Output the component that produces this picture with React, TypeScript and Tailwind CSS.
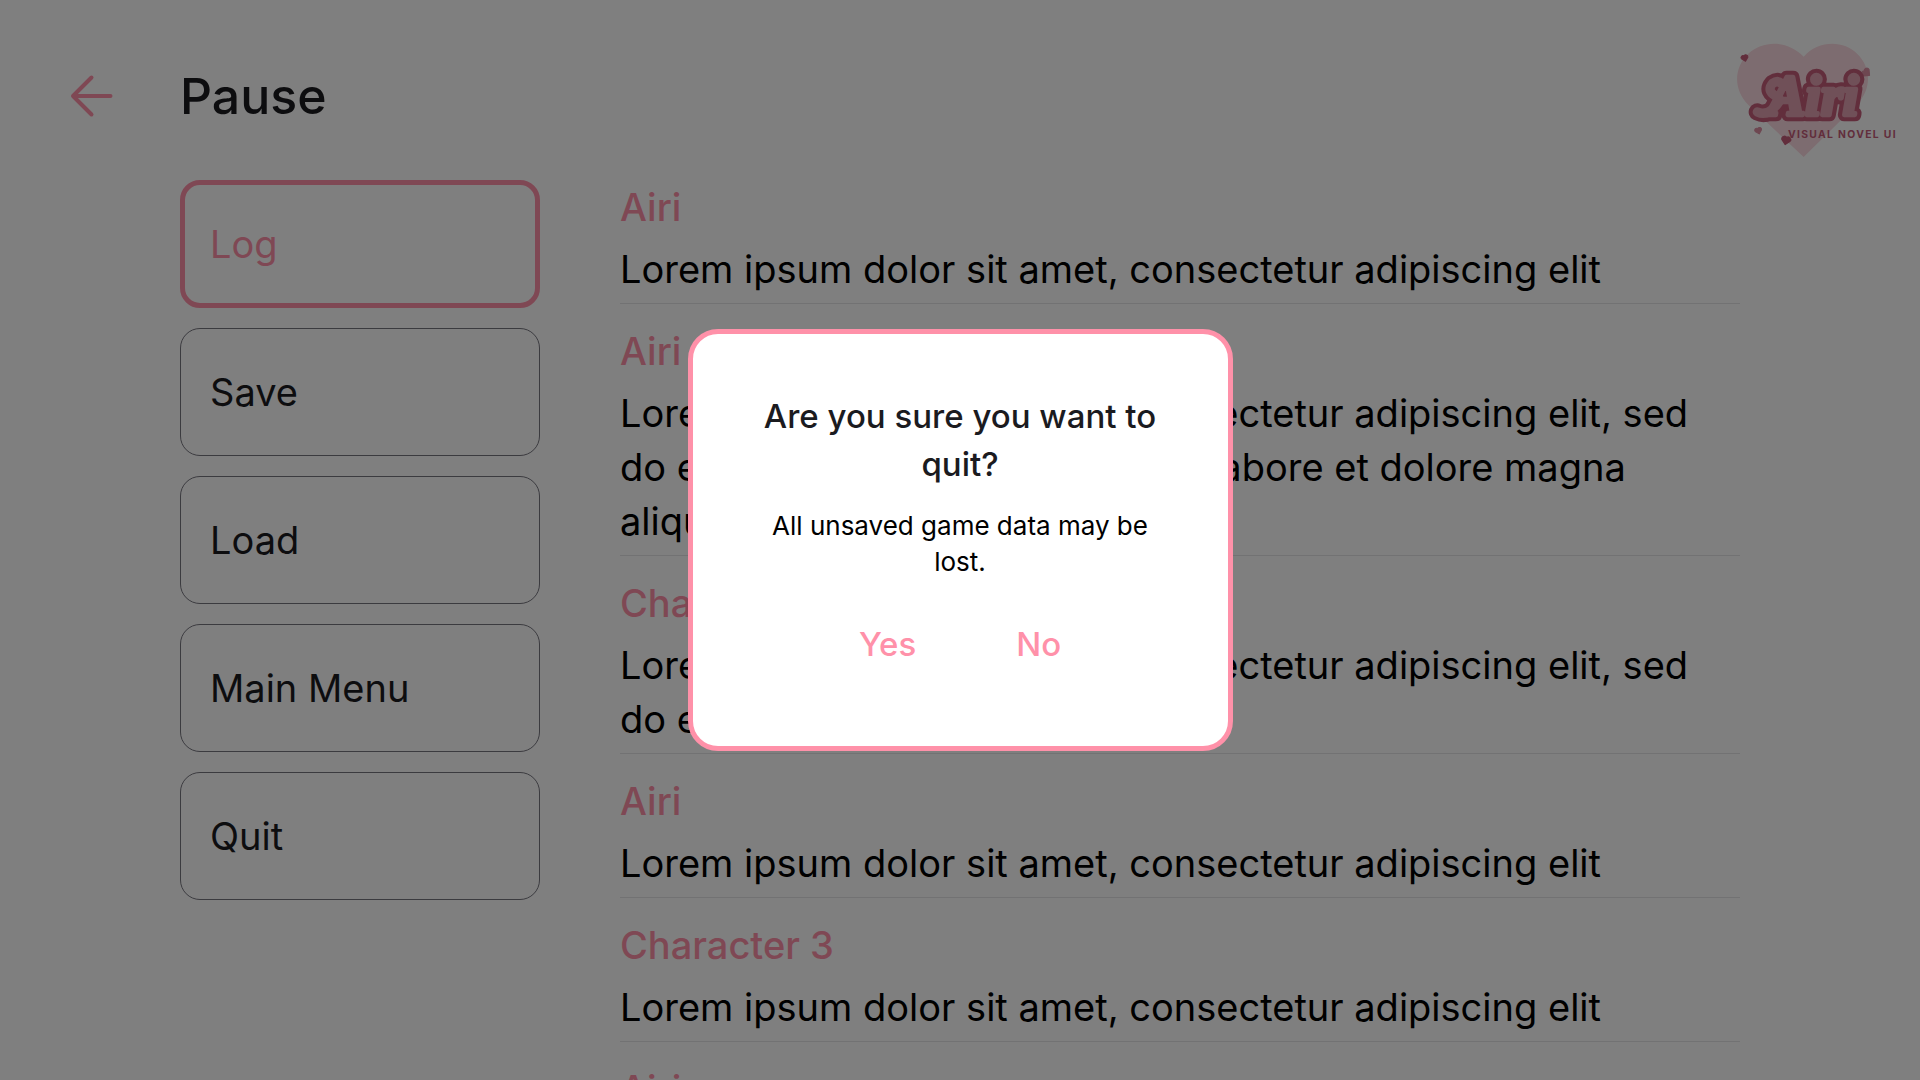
type Entry = { speaker: string; text: string };

const menu = ["Log", "Save", "Load", "Main Menu", "Quit"];

const base = "Lorem ipsum dolor sit amet, consectetur adipiscing elit";

const entries: Entry[] = [
  { speaker: "Airi", text: base },
  {
    speaker: "Airi",
    text: `${base}, sed do eiusmod tempor incididunt ut labore et dolore magna aliqua.`,
  },
  { speaker: "Character 2", text: `${base}, sed do eiusmod tempor.` },
  { speaker: "Airi", text: base },
  { speaker: "Character 3", text: base },
  { speaker: "Airi", text: base },
];

const smallHeart = "M0 9 L-9 0 A5.5 5.5 0 0 1 0 -6 A5.5 5.5 0 0 1 9 0 Z";
const swash = "M112 246 Q146 262 178 214 M176 202 Q136 186 158 160 Q172 150 184 160";

function Logo() {
  return (
    <svg viewBox="0 0 600 420" className="h-[140px] w-[200px]" role="img" aria-label="Airi Visual Novel UI">
      <path
        d="M251 381 L86 226 C36 176 44 110 84 72 C132 28 205 32 251 80 C292 32 370 28 412 72 C454 112 456 180 410 224 Z"
        fill="#fad9e0"
      />
      <g fill="#dc8fa3" stroke="#dc8fa3" strokeWidth="3" strokeLinejoin="round">
        <path d={smallHeart} transform="translate(74 84) rotate(-15) scale(1.1)" fill="#c45c79" stroke="#c45c79" />
        <path d={smallHeart} transform="translate(439 128) rotate(-50) scale(1.35)" />
        <path d={smallHeart} transform="translate(115 302) rotate(-15) scale(1.1)" />
        <path d={smallHeart} transform="translate(198 331) rotate(12) scale(1.4)" fill="#c45c79" stroke="#c45c79" />
      </g>
      <g
        fontFamily="'Liberation Serif', serif"
        fontSize="168"
        fontStyle="italic"
        fontWeight="700"
        strokeLinecap="round"
        strokeLinejoin="round"
      >
        <path d={swash} fill="none" stroke="#c45c79" strokeWidth="52" />
        <text x="144" y="254" fill="#c45c79" stroke="#c45c79" strokeWidth="38">
          Airi
        </text>
        <path d={swash} fill="none" stroke="#e0a1b0" strokeWidth="28" />
        <text x="144" y="254" fill="#e0a1b0" stroke="#e0a1b0" strokeWidth="13">
          Airi
        </text>
      </g>
      <text x="204" y="323" fill="#c45c79" fontFamily="Inter, sans-serif" fontSize="31" fontWeight="700" letterSpacing="4">
        VISUAL NOVEL UI
      </text>
    </svg>
  );
}

export default function App() {
  return (
    <div className="h-screen overflow-hidden bg-white font-['Inter',sans-serif] text-[#1b1b1f]">
      <header className="flex h-[180px] items-start">
        <div className="flex w-[180px] shrink-0 pt-[60px] pl-[62px]">
          <button type="button" aria-label="Back" className="flex h-[72px] w-[60px] items-center justify-center">
            <svg viewBox="0 0 60 60" className="size-[60px]" fill="none" stroke="#ff91a9" strokeWidth="4" strokeLinecap="round" strokeLinejoin="round">
              <path d="M48.500 30H11M29.500 11.500L11 30l18.500 18.500" />
            </svg>
          </button>
        </div>
        <h1 className="grow pt-[60px] text-[50px] leading-[72px] font-medium">Pause</h1>
        <div className="shrink-0 pt-[30px]">
          <Logo />
        </div>
      </header>

      <main className="flex items-start gap-20 px-[180px]">
        <nav className="flex w-[360px] shrink-0 flex-col gap-5" aria-label="Pause menu">
          {menu.map((item) =>
            item === "Log" ? (
              <button
                key={item}
                type="button"
                aria-current="page"
                className="h-32 rounded-[20px] border-5 border-[#ff91a9] px-[25px] text-left text-[38px] leading-[54px] text-[#ff91a9]"
              >
                {item}
              </button>
            ) : (
              <button
                key={item}
                type="button"
                className="h-32 rounded-[20px] border border-[#77767f] px-[29px] text-left text-[38px] leading-[54px]"
              >
                {item}
              </button>
            ),
          )}
        </nav>

        <section className="flex min-w-0 grow flex-col gap-5" aria-label="Log">
          {entries.map((entry, i) => (
            <article key={i} className="flex flex-col gap-2 border-b border-[#e4e4e6] pb-[7px] text-[38px] leading-[54px]">
              <h2 className="font-medium text-[#ff91a9]">{entry.speaker}</h2>
              <p className="text-black">{entry.text}</p>
            </article>
          ))}
        </section>
      </main>

      <div className="fixed inset-0 flex items-center justify-center bg-black/50">
        <div
          role="alertdialog"
          aria-modal="true"
          aria-labelledby="quit-title"
          aria-describedby="quit-text"
          className="flex w-[545px] flex-col items-center gap-5 rounded-[30px] border-5 border-[#ff91a9] bg-white px-[58px] py-[58px] text-center"
        >
          <h2 id="quit-title" className="text-[33px] leading-[48px] font-medium">
            Are you sure you want to quit?
          </h2>
          <p id="quit-text" className="text-[26px] leading-[36px] text-black">
            All unsaved game data may be lost.
          </p>
          <div className="flex gap-[60px] text-[33px] leading-[48px] font-medium text-[#ff91a9]">
            <button type="button" className="p-5">
              Yes
            </button>
            <button type="button" className="p-5">
              No
            </button>
          </div>
        </div>
      </div>
    </div>
  );
}
